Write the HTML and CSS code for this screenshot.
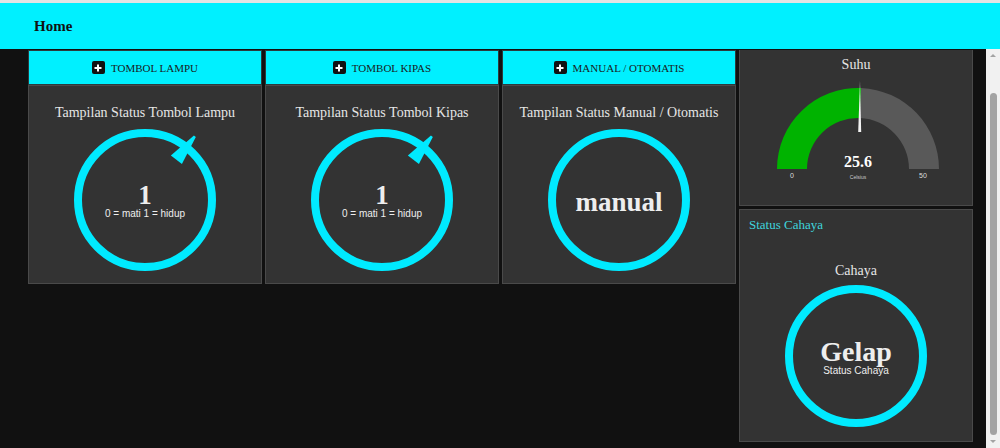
FILE: index.html
```html
<!DOCTYPE html>
<html lang="en">
<head>
  <meta charset="UTF-8">
  <meta name="viewport" content="width=device-width, initial-scale=1">
  <title>Home</title>
  <link rel="stylesheet" href="styles.css">
</head>
<body>

  <div class="topbar">
    <span class="title">Home</span>
  </div>

  <div class="main">
    <div class="content">

      <!-- Lampu -->
      <div class="column">
        <div class="btn-card"><span class="plus"></span>TOMBOL LAMPU</div>
        <div class="card">
          <p class="card-title">Tampilan Status Tombol Lampu</p>
          <div class="ring">
            <svg width="150" height="150" viewBox="0 0 150 150">
              <circle cx="75" cy="75" r="67" fill="none" stroke="#00eaff" stroke-width="8"/>
              <polygon points="73.8,-6 76.2,-6 82,24 68,24" fill="#00eaff" transform="rotate(38 75 75)"/>
            </svg>
            <div class="ring-label">
              <span class="big">1</span>
              <span class="small">0 = mati 1 = hidup</span>
            </div>
          </div>
        </div>
      </div>

      <!-- Kipas -->
      <div class="column">
        <div class="btn-card"><span class="plus"></span>TOMBOL KIPAS</div>
        <div class="card">
          <p class="card-title">Tampilan Status Tombol Kipas</p>
          <div class="ring">
            <svg width="150" height="150" viewBox="0 0 150 150">
              <circle cx="75" cy="75" r="67" fill="none" stroke="#00eaff" stroke-width="8"/>
              <polygon points="73.8,-6 76.2,-6 82,24 68,24" fill="#00eaff" transform="rotate(38 75 75)"/>
            </svg>
            <div class="ring-label">
              <span class="big">1</span>
              <span class="small">0 = mati 1 = hidup</span>
            </div>
          </div>
        </div>
      </div>

      <!-- Mode -->
      <div class="column">
        <div class="btn-card"><span class="plus"></span>MANUAL / OTOMATIS</div>
        <div class="card">
          <p class="card-title">Tampilan Status Manual / Otomatis</p>
          <div class="ring">
            <svg width="150" height="150" viewBox="0 0 150 150">
              <circle cx="75" cy="75" r="67" fill="none" stroke="#00eaff" stroke-width="8"/>
            </svg>
            <div class="ring-label solo">
              <span class="big">manual</span>
            </div>
          </div>
        </div>
      </div>

      <!-- Sensor -->
      <div class="column">
        <div class="card suhu">
          <p class="card-title">Suhu</p>
          <svg class="gauge" width="232" height="110" viewBox="0 0 232 110">
            <path d="M 37 90 A 81 81 0 0 1 121.1 9.06 L 119.96 39.04 A 51 51 0 0 0 67 90 Z" fill="#00b300"/>
            <path d="M 121.1 9.06 A 81 81 0 0 1 199 90 L 169 90 A 51 51 0 0 0 119.96 39.04 Z" fill="#595959"/>
            <polygon points="120,2 118.2,53 121.2,53" fill="#f2f2f2"/>
            <text x="118" y="88" class="g-value">25.6</text>
            <text x="118" y="100" class="g-unit">Celsius</text>
            <text x="52" y="99" class="g-tick">0</text>
            <text x="183" y="99" class="g-tick">50</text>
          </svg>
        </div>
        <div class="card cahaya">
          <p class="group-title">Status Cahaya</p>
          <p class="card-title">Cahaya</p>
          <div class="ring">
            <svg width="150" height="150" viewBox="0 0 150 150">
              <circle cx="75" cy="75" r="67" fill="none" stroke="#00eaff" stroke-width="8"/>
            </svg>
            <div class="ring-label">
              <span class="big gelap">Gelap</span>
              <span class="small">Status Cahaya</span>
            </div>
          </div>
        </div>
      </div>

    </div>

    <div class="scrollbar">
      <span class="arrow up"></span>
      <div class="track"><div class="thumb"></div></div>
      <span class="arrow down"></span>
    </div>
  </div>

</body>
</html>
```

FILE: styles.css
```css
body {
  margin: 0;
  background: #111;
  font-family: "Liberation Serif", "Times New Roman", serif;
  height: 448px;
  overflow: hidden;
}

.topbar {
  height: 46px;
  border-top: 3px solid #e4e4e4;
  background: #00f0ff;
  display: flex;
  align-items: center;
  padding-left: 34px;
}

.title {
  font-weight: bold;
  font-size: 15px;
  color: #111;
}

.main {
  display: flex;
  height: 399px;
}

.content {
  flex: 1;
  display: flex;
  gap: 3px;
  padding: 1px 0 0 28px;
  overflow: hidden;
}

.column {
  width: 234px;
  display: flex;
  flex-direction: column;
}

.btn-card {
  height: 33px;
  background: #00f0ff;
  border: 1px solid #2c3b3d;
  display: flex;
  align-items: center;
  justify-content: center;
  gap: 6px;
  font-size: 11px;
  color: #1a1a1a;
}

.plus {
  width: 13px;
  height: 13px;
  border-radius: 2px;
  background: #111;
  position: relative;
}

.plus::before, .plus::after {
  content: "";
  position: absolute;
  background: #fff;
  left: 50%;
  top: 50%;
  transform: translate(-50%, -50%);
}

.plus::before { width: 7px; height: 2px; }
.plus::after { width: 2px; height: 7px; }

.card {
  background: #333;
  border: 1px solid #4a4a4a;
  display: flex;
  flex-direction: column;
  align-items: center;
  height: 197px;
}

.card-title {
  margin: 19px 0 0;
  font-size: 14px;
  color: #e6e6e6;
  line-height: 16px;
}

.ring {
  display: grid;
  margin-top: 4px;
}

.ring > * {
  grid-area: 1 / 1;
}

.ring svg {
  overflow: visible;
}

.ring-label {
  display: flex;
  flex-direction: column;
  align-items: center;
  justify-content: center;
  color: #eee;
  padding-top: 2px;
}

.ring-label.solo {
  padding-top: 4px;
}

.big {
  font-weight: bold;
  font-size: 27px;
  line-height: 25px;
}

.big.gelap {
  font-size: 28px;
  line-height: 27px;
}

.small {
  font-family: "Liberation Sans", Arial, sans-serif;
  font-size: 10px;
  line-height: 12px;
}

/* sensor column */
.suhu {
  height: 155px;
  border-top: none;
}

.suhu .card-title {
  margin-top: 7px;
}

.gauge {
  margin-top: 6px;
}

.g-value {
  font-family: "Liberation Serif", serif;
  font-weight: bold;
  font-size: 16px;
  fill: #fff;
  text-anchor: middle;
}

.g-unit {
  font-family: "Liberation Sans", sans-serif;
  font-size: 5px;
  fill: #ccc;
  text-anchor: middle;
}

.g-tick {
  font-family: "Liberation Sans", sans-serif;
  font-size: 7px;
  fill: #ddd;
  text-anchor: middle;
}

.cahaya {
  margin-top: 3px;
  height: 231px;
  align-items: stretch;
}

.cahaya .card-title {
  text-align: center;
  margin-top: 30px;
}

.cahaya .ring {
  justify-self: center;
  align-self: center;
  margin-top: 2px;
}

.group-title {
  margin: 7px 0 0 9px;
  font-size: 13px;
  color: #3fd3dd;
}

/* fake scrollbar */
.scrollbar {
  width: 14px;
  background: #f1f1f1;
  display: flex;
  flex-direction: column;
  align-items: center;
}

.track {
  flex: 1;
  width: 100%;
  display: flex;
  flex-direction: column;
  justify-content: flex-end;
  align-items: center;
}

.thumb {
  width: 7px;
  height: 342px;
  background: #a3a3a3;
  border-radius: 4px;
}

.arrow {
  width: 0;
  height: 0;
  border-left: 3px solid transparent;
  border-right: 3px solid transparent;
  margin: 5px 0;
}

.arrow.up { border-bottom: 3px solid #a3a3a3; }
.arrow.down { border-top: 3px solid #a3a3a3; }
```
